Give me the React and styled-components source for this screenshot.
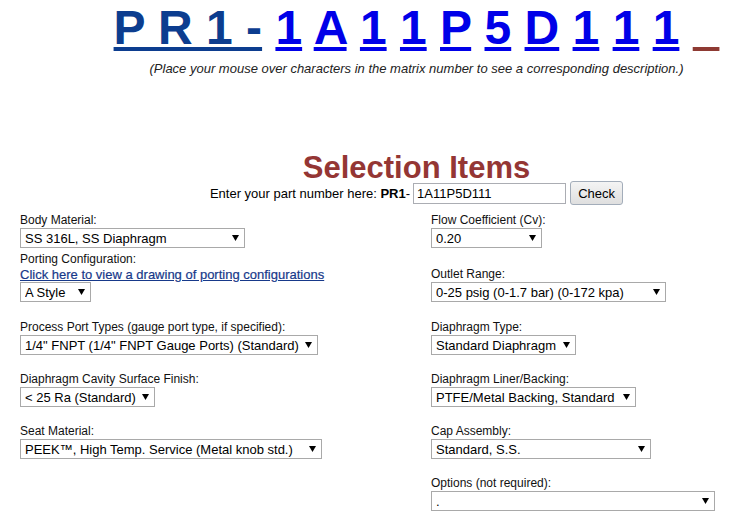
import React from "react";
import styled, { createGlobalStyle } from "styled-components";

const GlobalStyle = createGlobalStyle`
  html, body {
    margin: 0;
    padding: 0;
    background: #ffffff;
    overflow: hidden;
  }
  body {
    font-family: "Liberation Sans", Arial, sans-serif;
    color: #000;
  }
`;

const Page = styled.div`
  width: 745px;
  padding-top: 4px;
`;

const Banner = styled.header`
  padding-left: 88px;
`;

const Matrix = styled.div`
  text-align: center;
  font-size: 48px;
  font-weight: bold;
  line-height: 48px;
  white-space: nowrap;
`;

const Prefix = styled.a`
  color: #0c3d8f;
  text-decoration: underline;
  text-decoration-thickness: 4px;
  text-underline-offset: 3px;
`;

const Char = styled.a`
  color: #0000e8;
  text-decoration: underline;
  text-decoration-thickness: 4px;
  text-underline-offset: 3px;
  cursor: pointer;
`;

const Tail = styled.span`
  color: #8e3a33;
  text-decoration: underline;
  text-decoration-thickness: 4px;
  text-underline-offset: 3px;
`;

const Hint = styled.p`
  margin: 9px 0 0;
  text-align: center;
  font-size: 13px;
  font-style: italic;
  line-height: 15px;
  color: #222;
`;

const Title = styled.h1`
  margin: 79px 0 0;
  text-align: center;
  font-size: 31px;
  line-height: 26px;
  font-weight: bold;
  color: #943634;
`;

const PartRow = styled.div`
  display: flex;
  justify-content: center;
  align-items: center;
  font-size: 13px;
  height: 24px;
  white-space: pre;
`;

const PartInput = styled.input`
  box-sizing: border-box;
  width: 153px;
  height: 21px;
  margin-left: 3px;
  padding: 0 3px;
  border: 1px solid #abadb3;
  font: 13px "Liberation Sans", Arial, sans-serif;
  color: #000;
`;

const CheckButton = styled.button`
  box-sizing: border-box;
  width: 53px;
  height: 24px;
  margin-left: 4px;
  padding: 0;
  border: 1px solid #a3adba;
  border-radius: 3px;
  background: linear-gradient(#f4f4f4, #dfdfdf);
  font: 13px "Liberation Sans", Arial, sans-serif;
  color: #000;
`;

const Grid = styled.div`
  display: grid;
  grid-template-columns: 411px 1fr;
  align-items: end;
  margin-top: 8px;
  padding-left: 20px;
`;

const Field = styled.div`
  display: flex;
  flex-direction: column;
  align-items: flex-start;
  padding-bottom: ${(p) => p.$pad}px;
  grid-column: ${(p) => p.$col || "auto"};
`;

const Label = styled.div`
  font-size: 12px;
  line-height: 15px;
  color: #111;
`;

const DrawingLink = styled.a`
  font-size: 13px;
  line-height: 15px;
  color: #17398a;
  text-decoration: underline;
  -webkit-text-stroke: 0.2px #17398a;
`;

const SelectWrap = styled.div`
  position: relative;
  width: ${(p) => p.$w}px;
  height: 20px;
`;

const Select = styled.select`
  appearance: none;
  box-sizing: border-box;
  width: 100%;
  height: 20px;
  margin: 0;
  padding: 0 0 0 4px;
  border: 1px solid #a9a9a9;
  border-radius: 0;
  background: #fff;
  font: 13px "Liberation Sans", Arial, sans-serif;
  color: #000;
  outline: none;
`;

const Arrow = styled.svg`
  position: absolute;
  right: 6px;
  top: 7px;
  pointer-events: none;
`;

function Dropdown({ width, value }) {
  return (
    <SelectWrap $w={width}>
      <Select defaultValue={value}>
        <option value={value}>{value}</option>
      </Select>
      <Arrow width="7" height="6" viewBox="0 0 7 6">
        <polygon points="0,0 7,0 3.5,6" fill="#000" />
      </Arrow>
    </SelectWrap>
  );
}

const matrixChars = ["1", "A", "1", "1", "P", "5", "D", "1", "1", "1"];

const fields = [
  { label: "Body Material:", value: "SS 316L, SS Diaphragm", w: 225, pad: 4 },
  { label: "Flow Coefficient (Cv):", value: "0.20", w: 111, pad: 4 },
  {
    label: "Porting Configuration:",
    link: "Click here to view a drawing of porting configurations",
    value: "A Style",
    w: 71,
    pad: 18,
  },
  { label: "Outlet Range:", value: "0-25 psig (0-1.7 bar) (0-172 kpa)", w: 235, pad: 18 },
  {
    label: "Process Port Types (gauge port type, if specified):",
    value: '1/4" FNPT (1/4" FNPT Gauge Ports) (Standard)',
    w: 298,
    pad: 17,
  },
  { label: "Diaphragm Type:", value: "Standard Diaphragm", w: 145, pad: 17 },
  { label: "Diaphragm Cavity Surface Finish:", value: "< 25 Ra (Standard)", w: 135, pad: 17 },
  { label: "Diaphragm Liner/Backing:", value: "PTFE/Metal Backing, Standard", w: 205, pad: 17 },
  {
    label: "Seat Material:",
    value: "PEEK\u2122, High Temp. Service (Metal knob std.)",
    w: 302,
    pad: 17,
  },
  { label: "Cap Assembly:", value: "Standard, S.S.", w: 220, pad: 17 },
  { label: "Options (not required):", value: ".", w: 284, pad: 17, col: 2 },
];

export default function App() {
  return (
    <Page>
      <GlobalStyle />
      <Banner>
        <Matrix>
          <Prefix>P R 1 -</Prefix>
          {matrixChars.map((c, i) => (
            <React.Fragment key={i}>
              {" "}
              <Char>{c}</Char>
            </React.Fragment>
          ))}{" "}
          <Tail>{"\u2007"}</Tail>
        </Matrix>
        <Hint>
          (Place your mouse over characters in the matrix number to see a
          corresponding description.)
        </Hint>

        <Title>Selection Items</Title>
        <PartRow>
          Enter your part number here: <b>PR1</b>-
          <PartInput defaultValue="1A11P5D111" />
          <CheckButton>Check</CheckButton>
        </PartRow>
      </Banner>

      <Grid>
        {fields.map((f) => (
          <Field key={f.label} $pad={f.pad} $col={f.col}>
            <Label>{f.label}</Label>
            {f.link && <DrawingLink>{f.link}</DrawingLink>}
            <Dropdown width={f.w} value={f.value} />
          </Field>
        ))}
      </Grid>
    </Page>
  );
}
